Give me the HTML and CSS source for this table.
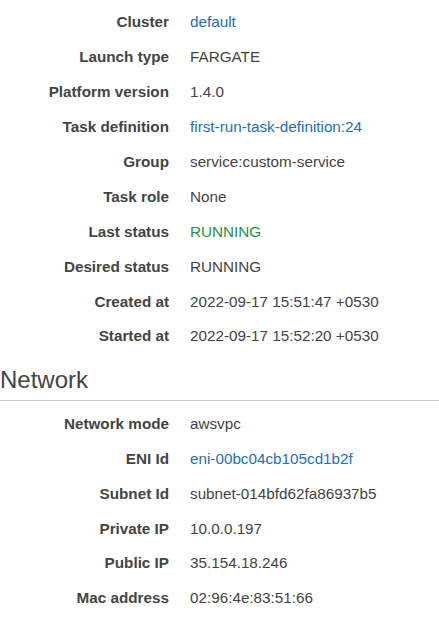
FILE: index.html
```html
<!DOCTYPE html>
<html>
<head>
<meta charset="utf-8">
<link rel="stylesheet" href="styles.css">
</head>
<body>
<div class="page">
  <dl class="details">
    <div class="row"><dt>Cluster</dt><dd><a class="link">default</a></dd></div>
    <div class="row"><dt>Launch type</dt><dd>FARGATE</dd></div>
    <div class="row"><dt>Platform version</dt><dd>1.4.0</dd></div>
    <div class="row"><dt>Task definition</dt><dd><a class="link">first-run-task-definition:24</a></dd></div>
    <div class="row"><dt>Group</dt><dd>service:custom-service</dd></div>
    <div class="row"><dt>Task role</dt><dd>None</dd></div>
    <div class="row"><dt>Last status</dt><dd class="ok">RUNNING</dd></div>
    <div class="row"><dt>Desired status</dt><dd>RUNNING</dd></div>
    <div class="row"><dt>Created at</dt><dd>2022-09-17 15:51:47 +0530</dd></div>
    <div class="row"><dt>Started at</dt><dd>2022-09-17 15:52:20 +0530</dd></div>
  </dl>
  <h2 class="section-title">Network</h2>
  <dl class="details net">
    <div class="row"><dt>Network mode</dt><dd>awsvpc</dd></div>
    <div class="row"><dt>ENI Id</dt><dd><a class="link">eni-00bc04cb105cd1b2f</a></dd></div>
    <div class="row"><dt>Subnet Id</dt><dd>subnet-014bfd62fa86937b5</dd></div>
    <div class="row"><dt>Private IP</dt><dd>10.0.0.197</dd></div>
    <div class="row"><dt>Public IP</dt><dd>35.154.18.246</dd></div>
    <div class="row"><dt>Mac address</dt><dd>02:96:4e:83:51:66</dd></div>
  </dl>
</div>
</body>
</html>
```

FILE: styles.css
```css
html, body {
  margin: 0;
  padding: 0;
  background: #fff;
}
body {
  font-family: "Liberation Sans", Arial, sans-serif;
  font-size: 15.25px;
  color: #444;
}
.page {
  padding-top: 4.5px;
}
.details {
  margin: 0;
  display: flex;
  flex-direction: column;
}
.row {
  display: flex;
  align-items: center;
  height: 34.9px;
}
dt {
  width: 169px;
  text-align: right;
  font-weight: bold;
  color: #444;
}
dd {
  margin: 0 0 0 21px;
  color: #444;
}
.link {
  color: #1f6fb5;
  text-decoration: none;
}
.ok {
  color: #21963f;
}
.section-title {
  margin: 13.5px 0 0;
  padding-bottom: 7.5px;
  font-size: 24px;
  font-weight: normal;
  line-height: 26px;
  color: #444;
  border-bottom: 1px solid #ccc;
}
.net {
  margin-top: 4.5px;
}
```
